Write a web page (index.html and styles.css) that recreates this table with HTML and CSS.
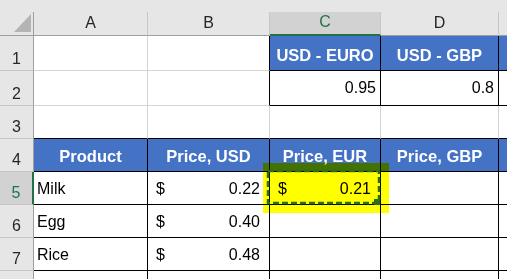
FILE: index.html
```html
<!DOCTYPE html>
<html>
<head>
<meta charset="utf-8">
<link rel="stylesheet" href="styles.css">
</head>
<body>
<div class="topbar"></div>
<div class="sheet">
  <div class="ch corner"><svg class="tri" width="18" height="19" viewBox="0 0 18 19"><path d="M17 0 L17 18 L0 18 Z" fill="#b4b4b4"/></svg></div>
  <div class="ch">A</div>
  <div class="ch">B</div>
  <div class="ch ch-sel">C</div>
  <div class="ch">D</div>
  <div class="ch ch-last"></div>

  <div class="rh">1</div>
  <div class="c"></div>
  <div class="c br"></div>
  <div class="c blue br bb">USD - EURO</div>
  <div class="c blue br bb">USD - GBP</div>
  <div class="c blue bb"></div>

  <div class="rh">2</div>
  <div class="c"></div>
  <div class="c br"></div>
  <div class="c num br bb">0.95</div>
  <div class="c num br bb">0.8</div>
  <div class="c bb"></div>

  <div class="rh">3</div>
  <div class="c bb"></div>
  <div class="c bb"></div>
  <div class="c bb"></div>
  <div class="c bb"></div>
  <div class="c bb"></div>

  <div class="rh">4</div>
  <div class="c blue br bb">Product</div>
  <div class="c blue br bb">Price, USD</div>
  <div class="c blue br bb">Price, EUR</div>
  <div class="c blue br bb">Price, GBP</div>
  <div class="c blue bb"></div>

  <div class="rh rh-sel">5</div>
  <div class="c txt br bb">Milk</div>
  <div class="c acc br bb"><span>$</span><span>0.22</span></div>
  <div class="c acc br bb sel"><span>$</span><span>0.21</span>
    <div class="hl"></div>
    <svg class="ants" width="118" height="38" viewBox="0 0 118 38"><rect x="3" y="2" width="111" height="32" fill="none" stroke="#2e6b1a" stroke-width="2.5" stroke-dasharray="6 3"/><rect x="109" y="30" width="6" height="6" fill="#2e6b1a"/></svg>
  </div>
  <div class="c br bb"></div>
  <div class="c bb"></div>

  <div class="rh">6</div>
  <div class="c txt br bb">Egg</div>
  <div class="c acc br bb"><span>$</span><span>0.40</span></div>
  <div class="c br bb"></div>
  <div class="c br bb"></div>
  <div class="c bb"></div>

  <div class="rh">7</div>
  <div class="c txt br bb">Rice</div>
  <div class="c acc br bb"><span>$</span><span>0.48</span></div>
  <div class="c br bb"></div>
  <div class="c br bb"></div>
  <div class="c bb"></div>

  <div class="rh"></div>
  <div class="c br"></div>
  <div class="c br"></div>
  <div class="c br"></div>
  <div class="c br"></div>
  <div class="c"></div>
</div>
</body>
</html>
```
FILE: styles.css
```css
html, body {
  margin: 0;
  padding: 0;
  overflow: hidden;
  background: #ffffff;
  font-family: "Liberation Sans", Arial, sans-serif;
}
.topbar {
  height: 12px;
  background: #e6e6e6;
}
.sheet {
  display: grid;
  grid-template-columns: 34px 114px 122px 111px 118px 40px;
  grid-template-rows: 24px 35px 35px 33px 33px 33px 33px 33px 33px;
  width: 507px;
  overflow: hidden;
}
.sheet > div {
  box-sizing: border-box;
}
.ch {
  background: #e6e6e6;
  border-right: 1px solid #c6c6c6;
  border-bottom: 1px solid #9e9e9e;
  display: flex;
  align-items: flex-end;
  justify-content: center;
  font-size: 16px;
  line-height: 16px;
  padding-bottom: 4px;
  color: #262626;
}
.ch.corner {
  border-right: 1px solid #9e9e9e;
  justify-content: flex-end;
  align-items: flex-end;
  padding: 0 1px 2px 0;
}
.tri {
  display: block;
  flex: none;
}
.ch-sel {
  background: #d2d2d2;
  border-bottom: 2px solid #217346;
  color: #217346;
}
.ch-last {
  border-right: 1px solid #9e9e9e;
}
.rh {
  background: #e6e6e6;
  border-right: 1px solid #9e9e9e;
  border-bottom: 1px solid #c6c6c6;
  display: flex;
  align-items: flex-end;
  justify-content: center;
  font-size: 16px;
  line-height: 16px;
  padding-bottom: 3px;
  color: #262626;
}
.rh-sel {
  background: #d2d2d2;
  border-right: 2px solid #217346;
  color: #217346;
}
.c {
  border-right: 1px solid #d4d4d4;
  border-bottom: 1px solid #d4d4d4;
  display: flex;
  align-items: flex-end;
  font-size: 16px;
  line-height: 16px;
  padding-bottom: 7px;
  color: #000;
  white-space: nowrap;
}
.c.br { border-right-color: #000; }
.c.bb { border-bottom-color: #000; }
.blue {
  background: #4472c4;
  color: #fff;
  font-weight: bold;
  font-size: 16.5px;
  justify-content: center;
}
.num {
  justify-content: flex-end;
  padding-right: 4px;
  padding-bottom: 9px;
}
.txt {
  padding-left: 3px;
}
.acc {
  justify-content: space-between;
  padding-left: 8px;
  padding-right: 9px;
}
.sel {
  position: relative;
}
.hl {
  position: absolute;
  left: -7px;
  top: -9px;
  width: 126px;
  height: 50px;
  background: #ffff00;
  mix-blend-mode: multiply;
  pointer-events: none;
}
.ants {
  position: absolute;
  left: -5px;
  top: -3px;
}
```
